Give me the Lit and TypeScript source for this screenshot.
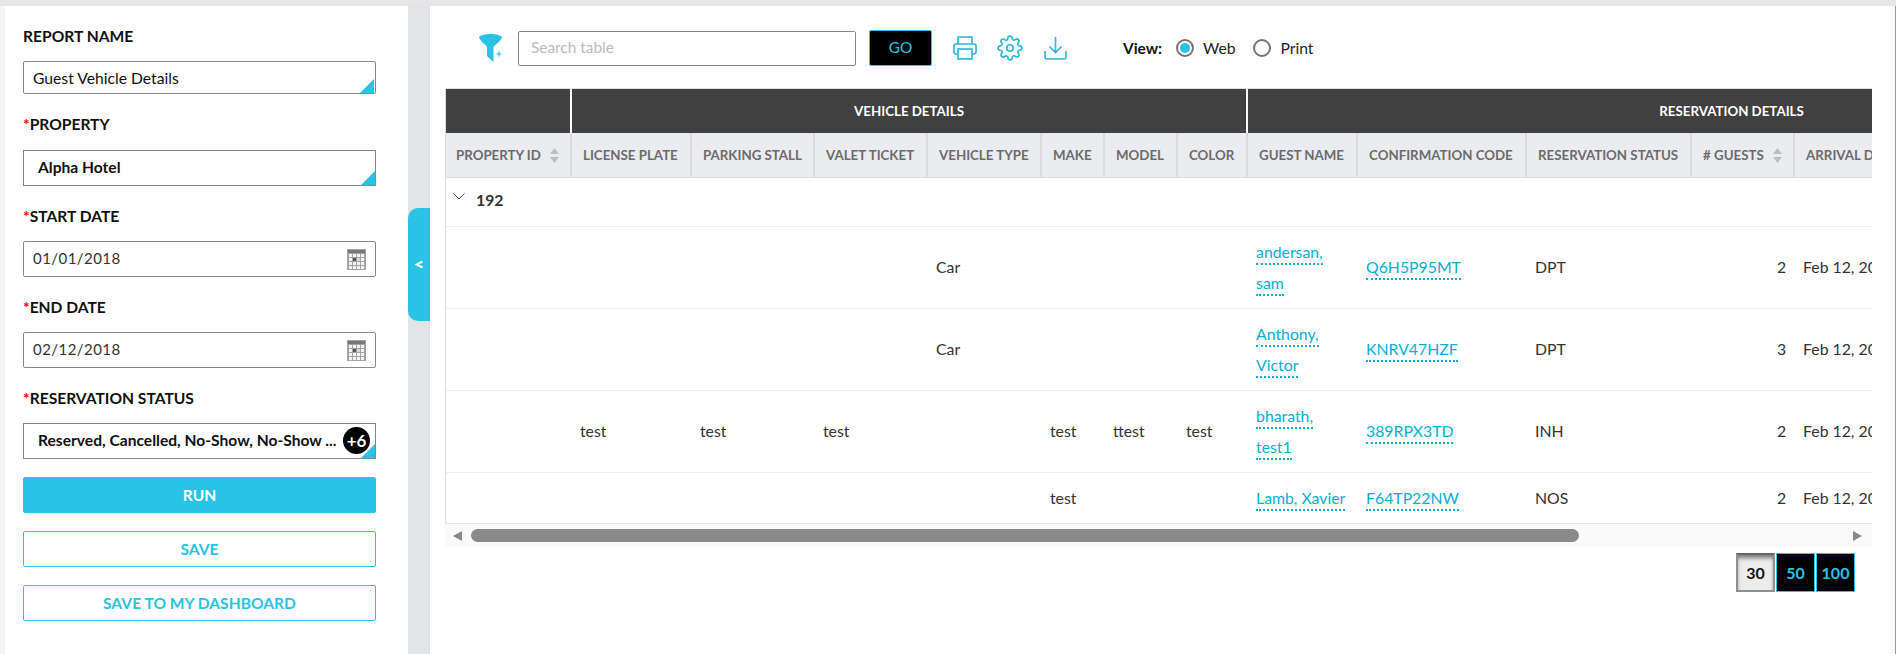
import { LitElement, html, css, svg } from 'lit';
import { customElement } from 'lit/decorators.js';

const COL_WIDTHS = [126, 120, 123, 113, 114, 63, 73, 70, 110, 169, 165, 103, 110, 310];

const COLUMNS = [
  'PROPERTY ID',
  'LICENSE PLATE',
  'PARKING STALL',
  'VALET TICKET',
  'VEHICLE TYPE',
  'MAKE',
  'MODEL',
  'COLOR',
  'GUEST NAME',
  'CONFIRMATION CODE',
  'RESERVATION STATUS',
  '# GUESTS',
  'ARRIVAL DATE',
  '',
];

const ROWS = [
  { plate: '', stall: '', ticket: '', type: 'Car', make: '', model: '', color: '', name: ['andersan,', 'sam'], code: 'Q6H5P95MT', status: 'DPT', guests: 2 },
  { plate: '', stall: '', ticket: '', type: 'Car', make: '', model: '', color: '', name: ['Anthony,', 'Victor'], code: 'KNRV47HZF', status: 'DPT', guests: 3 },
  { plate: 'test', stall: 'test', ticket: 'test', type: '', make: 'test', model: 'ttest', color: 'test', name: ['bharath,', 'test1'], code: '389RPX3TD', status: 'INH', guests: 2 },
  { plate: '', stall: '', ticket: '', type: '', make: 'test', model: '', color: '', name: ['Lamb, Xavier'], code: 'F64TP22NW', status: 'NOS', guests: 2 },
];

const calendarIcon = svg`
  <svg class="cal" width="19" height="21" viewBox="0 0 19 21">
    <rect width="19" height="21" fill="#a3a3a3" />
    <rect x="1" y="1" width="17" height="3" fill="#777" />
    <g fill="#f4f4f4">
      <rect x="2" y="5" width="3" height="3" /><rect x="6" y="5" width="3" height="3" /><rect x="10" y="5" width="3" height="3" /><rect x="14" y="5" width="3" height="3" />
      <rect x="2" y="9" width="3" height="3" /><rect x="14" y="9" width="3" height="3" />
      <rect x="2" y="13" width="3" height="3" /><rect x="6" y="13" width="3" height="3" /><rect x="10" y="13" width="3" height="3" /><rect x="14" y="13" width="3" height="3" />
      <rect x="2" y="17" width="3" height="3" /><rect x="6" y="17" width="3" height="3" /><rect x="10" y="17" width="3" height="3" /><rect x="14" y="17" width="3" height="3" />
    </g>
    <rect x="6" y="9" width="3" height="3" fill="#555" /><rect x="10" y="9" width="3" height="3" fill="#d8d8d8" />
  </svg>
`;

const sortIcon = svg`
  <svg class="sort" width="9" height="15" viewBox="0 0 9 15">
    <path d="M4.5 0 L9 6 H0 Z M0 9 H9 L4.5 15 Z" fill="#bdbdbd" />
  </svg>
`;

@customElement('app-root')
export class AppRoot extends LitElement {
  static override styles = css`
    :host {
      display: block;
      width: 1896px;
      height: 654px;
      overflow: hidden;
      font-family: Lato, 'Open Sans', sans-serif;
      font-size: 15.8px;
      color: #333;
      background: #f5f5f5;
    }
    * {
      box-sizing: border-box;
    }
    .page {
      display: flex;
      height: 654px;
      padding: 6px 0 0 5px;
      background: linear-gradient(#e6e6e6 6px, #f5f5f5 6px);
    }

    /* filter panel */
    .side {
      flex: 0 0 403px;
      padding: 20px 32px 0 18px;
      background: #fff;
    }
    .field {
      margin-bottom: 20px;
    }
    .field label {
      display: block;
      height: 20px;
      margin-bottom: 15px;
      font-size: 15.6px;
      line-height: 20px;
      font-weight: 700;
      color: #111;
    }
    .field label.tight {
      margin-bottom: 16px;
    }
    .field label i {
      font-style: normal;
      color: #f00;
    }
    .box {
      position: relative;
      display: flex;
      align-items: center;
      height: 36px;
      padding: 0 0 2px 14px;
      border: 1px solid #888;
      font-size: 15.6px;
      font-weight: 700;
      color: #111;
      background: #fff;
    }
    .box.text {
      height: 33px;
      padding: 0 0 0 9px;
      border-radius: 2px;
      font-size: 15.7px;
      font-weight: 400;
    }
    .box.date {
      justify-content: space-between;
      padding: 0 9px;
      border-radius: 2px;
      font-size: 15px;
      font-weight: 400;
      letter-spacing: 0.45px;
      color: #333;
    }
    .date-val {
      margin-top: -2px;
    }
    .corner {
      position: absolute;
      right: 0;
      bottom: 0;
      width: 0;
      height: 0;
      border-style: solid;
      border-width: 0 0 14px 14px;
      border-color: transparent transparent #29c3e5 transparent;
    }
    .box.text .corner {
      right: 1px;
      bottom: 0;
    }
    .cal {
      display: block;
    }
    .ellipsis {
      white-space: nowrap;
    }
    .badge {
      position: absolute;
      right: 5px;
      top: 3px;
      width: 27px;
      height: 27px;
      border-radius: 50%;
      background: #000;
      color: #fff;
      font-size: 17px;
      font-weight: 700;
      line-height: 27px;
      text-align: center;
    }
    .btn {
      display: block;
      width: 100%;
      height: 36px;
      margin-bottom: 18px;
      padding: 0;
      border: 1px solid #29c3e5;
      border-radius: 2px;
      background: #fff;
      color: #29c3e5;
      font: 700 15.6px Lato, sans-serif;
    }
    .btn.run {
      margin-top: -2px;
      background: #29c3e5;
      color: #fff;
    }

    .gutter {
      flex: 0 0 22px;
      padding-top: 202px;
      background: #e3e4e8;
    }
    .tab {
      display: flex;
      align-items: center;
      justify-content: center;
      height: 113px;
      padding-left: 1px;
      border-radius: 10px 0 0 10px;
      background: #29c3e5;
    }

    /* report */
    .main {
      flex: 0 0 1460px;
      padding: 24px 18px 0 15px;
      background: #fff;
    }
    .tools {
      display: flex;
      align-items: center;
      height: 36px;
      margin-bottom: 22px;
      padding-left: 34px;
    }
    .tools svg {
      display: block;
      flex: none;
    }
    .search {
      width: 338px;
      height: 35px;
      margin: 0 13px 0 16px;
      padding-left: 12px;
      border: 1px solid #888;
      border-radius: 2px;
      font-size: 15.4px;
      line-height: 31px;
      color: #bbb;
    }
    .go {
      width: 63px;
      height: 36px;
      margin-right: 21px;
      border: 1px solid #29c3e5;
      border-radius: 2px;
      background: #000;
      color: #29c3e5;
      font-size: 15.4px;
      line-height: 33px;
      text-align: center;
    }
    .print {
      margin-right: 20px;
    }
    .gear {
      margin-right: 21px;
    }
    .view {
      margin: 0 14px 0 56px;
      font-size: 15.4px;
      font-weight: 700;
      color: #111;
    }
    .radio {
      display: flex;
      align-items: center;
      justify-content: center;
      width: 18px;
      height: 18px;
      margin-right: 9px;
      border: 2px solid #757575;
      border-radius: 50%;
    }
    .radio b {
      width: 10px;
      height: 10px;
      border-radius: 50%;
      background: #29c3e5;
    }
    .opt {
      margin-right: 18px;
      font-size: 15.7px;
      color: #222;
    }

    .scroller {
      width: 1427px;
      overflow: hidden;
      border-left: 1px solid #ddd;
    }
    table {
      width: 1769px;
      table-layout: fixed;
      border-collapse: separate;
      border-spacing: 0;
    }
    th {
      padding: 0;
      font-size: 13.3px;
      font-weight: 700;
      white-space: nowrap;
      overflow: hidden;
    }
    .groups th {
      height: 45px;
      border-top: 1px solid #ddd;
      border-right: 2px solid #fff;
      background: #404040;
      color: #fff;
    }
    .groups th:last-child {
      border-right: 0;
    }
    .heads th {
      height: 45px;
      padding-left: 11px;
      border-right: 2px solid #dcdcdc;
      border-bottom: 1px solid #ddd;
      background: #ebecf0;
      color: #6b6b6b;
      text-align: left;
    }
    .heads th:first-child {
      padding-left: 10px;
    }
    .sort {
      margin-left: 6px;
      vertical-align: -3px;
    }
    td {
      padding: 0 9px 2px 8px;
      border-bottom: 1px solid #eee;
      white-space: nowrap;
      overflow: hidden;
      color: #333;
    }
    tr.grp td {
      height: 49px;
      padding-left: 0;
      padding-bottom: 6px;
    }
    .grp-in {
      display: flex;
      align-items: center;
      padding-left: 7px;
      font-size: 15.8px;
      font-weight: 700;
      color: #333;
    }
    .grp-in svg {
      margin-right: 11px;
      margin-bottom: 6px;
    }
    tr.row td {
      height: 82px;
    }
    tr.row.last td {
      height: 50px;
      border-bottom: 0;
    }
    td.num {
      text-align: right;
    }
    td.name {
      line-height: 31px;
      white-space: normal;
    }
    .lnk {
      padding-bottom: 2px;
      border-bottom: 2px dotted #08afd3;
      color: #08afd3;
    }
    .bar {
      display: flex;
      align-items: center;
      width: 1427px;
      height: 24px;
      border-top: 1px solid #e4e4e4;
      background: #fafafa;
    }
    .arrow {
      width: 0;
      height: 0;
      border-style: solid;
    }
    .arrow.left {
      margin: 0 9px 0 8px;
      border-width: 5.5px 9px 5.5px 0;
      border-color: transparent #8a8a8a transparent transparent;
    }
    .arrow.right {
      margin-left: 274px;
      border-width: 5.5px 0 5.5px 9px;
      border-color: transparent transparent transparent #8a8a8a;
    }
    .thumb {
      flex: 0 0 1108px;
      height: 13px;
      border-radius: 7px;
      background: #8a8a8a;
    }
    .pages {
      display: flex;
      justify-content: flex-end;
      width: 1410px;
      margin-top: 6px;
    }
    .pages div {
      width: 39px;
      height: 39px;
      margin-right: 1px;
      border: 1px solid #29c3e5;
      background: #000;
      color: #29c3e5;
      font-size: 16px;
      font-weight: 700;
      line-height: 37px;
      text-align: center;
    }
    .pages div:last-child {
      margin-right: 0;
    }
    .pages div.on {
      border: 2px solid #8f8f8f;
      border-top-color: #666;
      background: #ececec;
      box-shadow: inset 0 4px 4px -1px #777;
      color: #111;
      line-height: 35px;
    }
    .edge {
      flex: 1;
      border-right: 1px solid #999;
      background: #fafafa;
    }
  `;

  renderField(label: string, required: boolean, body: unknown, tight = false) {
    return html`<div class="field">
      <label class=${tight ? 'tight' : ''}>${required ? html`<i>*</i>` : ''}${label}</label>
      ${body}
    </div>`;
  }

  renderRow(r: (typeof ROWS)[number], last: boolean) {
    return html`<tr class="row ${last ? 'last' : ''}">
      <td></td>
      <td>${r.plate}</td>
      <td>${r.stall}</td>
      <td>${r.ticket}</td>
      <td>${r.type}</td>
      <td>${r.make}</td>
      <td>${r.model}</td>
      <td>${r.color}</td>
      <td class="name">
        ${r.name.map((n, i) => html`${i ? html`<br />` : ''}<span class="lnk">${n}</span>`)}
      </td>
      <td><span class="lnk">${r.code}</span></td>
      <td>${r.status}</td>
      <td class="num">${r.guests}</td>
      <td>Feb 12, 2018</td>
      <td></td>
    </tr>`;
  }

  override render() {
    return html`<div class="page">
      <div class="side">
        ${this.renderField('REPORT NAME', false, html`<div class="box text">Guest Vehicle Details<span class="corner"></span></div>`)}
        ${this.renderField('PROPERTY', true, html`<div class="box">Alpha Hotel<span class="corner"></span></div>`, true)}
        ${this.renderField('START DATE', true, html`<div class="box date"><span class="date-val">01/01/2018</span>${calendarIcon}</div>`)}
        ${this.renderField('END DATE', true, html`<div class="box date"><span class="date-val">02/12/2018</span>${calendarIcon}</div>`)}
        ${this.renderField(
          'RESERVATION STATUS',
          true,
          html`<div class="box">
            <span class="ellipsis">Reserved, Cancelled, No-Show, No-Show ...</span>
            <span class="badge">+6</span><span class="corner"></span>
          </div>`,
        )}
        <button class="btn run">RUN</button>
        <button class="btn">SAVE</button>
        <button class="btn">SAVE TO MY DASHBOARD</button>
      </div>

      <div class="gutter">
        <div class="tab">
          <svg width="9" height="9" viewBox="0 0 9 9"><path d="M7.5 1.5 L1.5 4.5 L7.5 7.5" fill="none" stroke="#fff" stroke-width="2" /></svg>
        </div>
      </div>

      <div class="main">
        <div class="tools">
          <svg width="23" height="28" viewBox="0 0 23 28">
            <path d="M0 3 C4 -1 19 -1 23 3 C22 7 17 10 14.5 13 V28 L8 22 V13 C6 10 1 7 0 3 Z" fill="#29c3e5" />
            <path d="M20 17.5 V22.5 M17.5 20 H22.5" stroke="#29c3e5" stroke-width="1.2" fill="none" />
          </svg>
          <div class="search">Search table</div>
          <div class="go">GO</div>
          <svg class="print" width="24" height="24" viewBox="0 0 24 24" fill="none" stroke="#29b6d8" stroke-width="1.6">
            <path d="M5 8 V1 H19 V8" />
            <path d="M5 18 H3 A2 2 0 0 1 1 16 V10 A2 2 0 0 1 3 8 H21 A2 2 0 0 1 23 10 V16 A2 2 0 0 1 21 18 H19" />
            <rect x="5" y="13" width="14" height="10" />
          </svg>
          <svg class="gear" width="26" height="26" viewBox="0 0 24 24" fill="none" stroke="#29b6d8" stroke-width="1.5">
            <circle cx="12" cy="12" r="3" />
            <path d="M19.4 15a1.65 1.65 0 0 0 .33 1.82l.06.06a2 2 0 0 1 0 2.83 2 2 0 0 1-2.83 0l-.06-.06a1.65 1.65 0 0 0-1.82-.33 1.65 1.65 0 0 0-1 1.51V21a2 2 0 0 1-2 2 2 2 0 0 1-2-2v-.09A1.65 1.65 0 0 0 9 19.4a1.65 1.65 0 0 0-1.82.33l-.06.06a2 2 0 0 1-2.83 0 2 2 0 0 1 0-2.83l.06-.06a1.65 1.65 0 0 0 .33-1.82 1.65 1.65 0 0 0-1.51-1H3a2 2 0 0 1-2-2 2 2 0 0 1 2-2h.09A1.65 1.65 0 0 0 4.6 9a1.65 1.65 0 0 0-.33-1.82l-.06-.06a2 2 0 0 1 0-2.83 2 2 0 0 1 2.83 0l.06.06a1.65 1.65 0 0 0 1.82.33H9a1.65 1.65 0 0 0 1-1.51V3a2 2 0 0 1 2-2 2 2 0 0 1 2 2v.09a1.65 1.65 0 0 0 1 1.51 1.65 1.65 0 0 0 1.82-.33l.06-.06a2 2 0 0 1 2.83 0 2 2 0 0 1 0 2.83l-.06.06a1.65 1.65 0 0 0-.33 1.82V9a1.65 1.65 0 0 0 1.51 1H21a2 2 0 0 1 2 2 2 2 0 0 1-2 2h-.09a1.65 1.65 0 0 0-1.51 1z" />
          </svg>
          <svg width="23" height="23" viewBox="0 0 23 23" fill="none" stroke="#29b6d8" stroke-width="1.6">
            <path d="M11.5 0 V15 M5.5 9.5 L11.5 15.5 L17.5 9.5" />
            <path d="M1 14 V20 A2 2 0 0 0 3 22 H20 A2 2 0 0 0 22 20 V14" />
          </svg>
          <span class="view">View:</span>
          <span class="radio"><b></b></span><span class="opt">Web</span>
          <span class="radio"></span><span class="opt">Print</span>
        </div>

        <div class="scroller">
          <table>
            <colgroup>
              ${COL_WIDTHS.map((w) => html`<col style="width:${w}px" />`)}
            </colgroup>
            <thead>
              <tr class="groups">
                <th></th>
                <th colspan="7">VEHICLE DETAILS</th>
                <th colspan="6">RESERVATION DETAILS</th>
              </tr>
              <tr class="heads">
                ${COLUMNS.map(
                  (c) => html`<th>${c}${c === 'PROPERTY ID' || c === '# GUESTS' ? sortIcon : ''}</th>`,
                )}
              </tr>
            </thead>
            <tbody>
              <tr class="grp">
                <td colspan="14">
                  <div class="grp-in">
                    <svg width="12" height="7" viewBox="0 0 12 7"><path d="M0.5 0.5 L6 6 L11.5 0.5" fill="none" stroke="#555" stroke-width="1" /></svg>
                    192
                  </div>
                </td>
              </tr>
              ${ROWS.map((r, i) => this.renderRow(r, i === ROWS.length - 1))}
            </tbody>
          </table>
        </div>
        <div class="bar">
          <span class="arrow left"></span>
          <span class="thumb"></span>
          <span class="arrow right"></span>
        </div>
        <div class="pages">
          <div class="on">30</div>
          <div>50</div>
          <div>100</div>
        </div>
      </div>
      <div class="edge"></div>
    </div>`;
  }
}

declare global {
  interface HTMLElementTagNameMap {
    'app-root': AppRoot;
  }
}
